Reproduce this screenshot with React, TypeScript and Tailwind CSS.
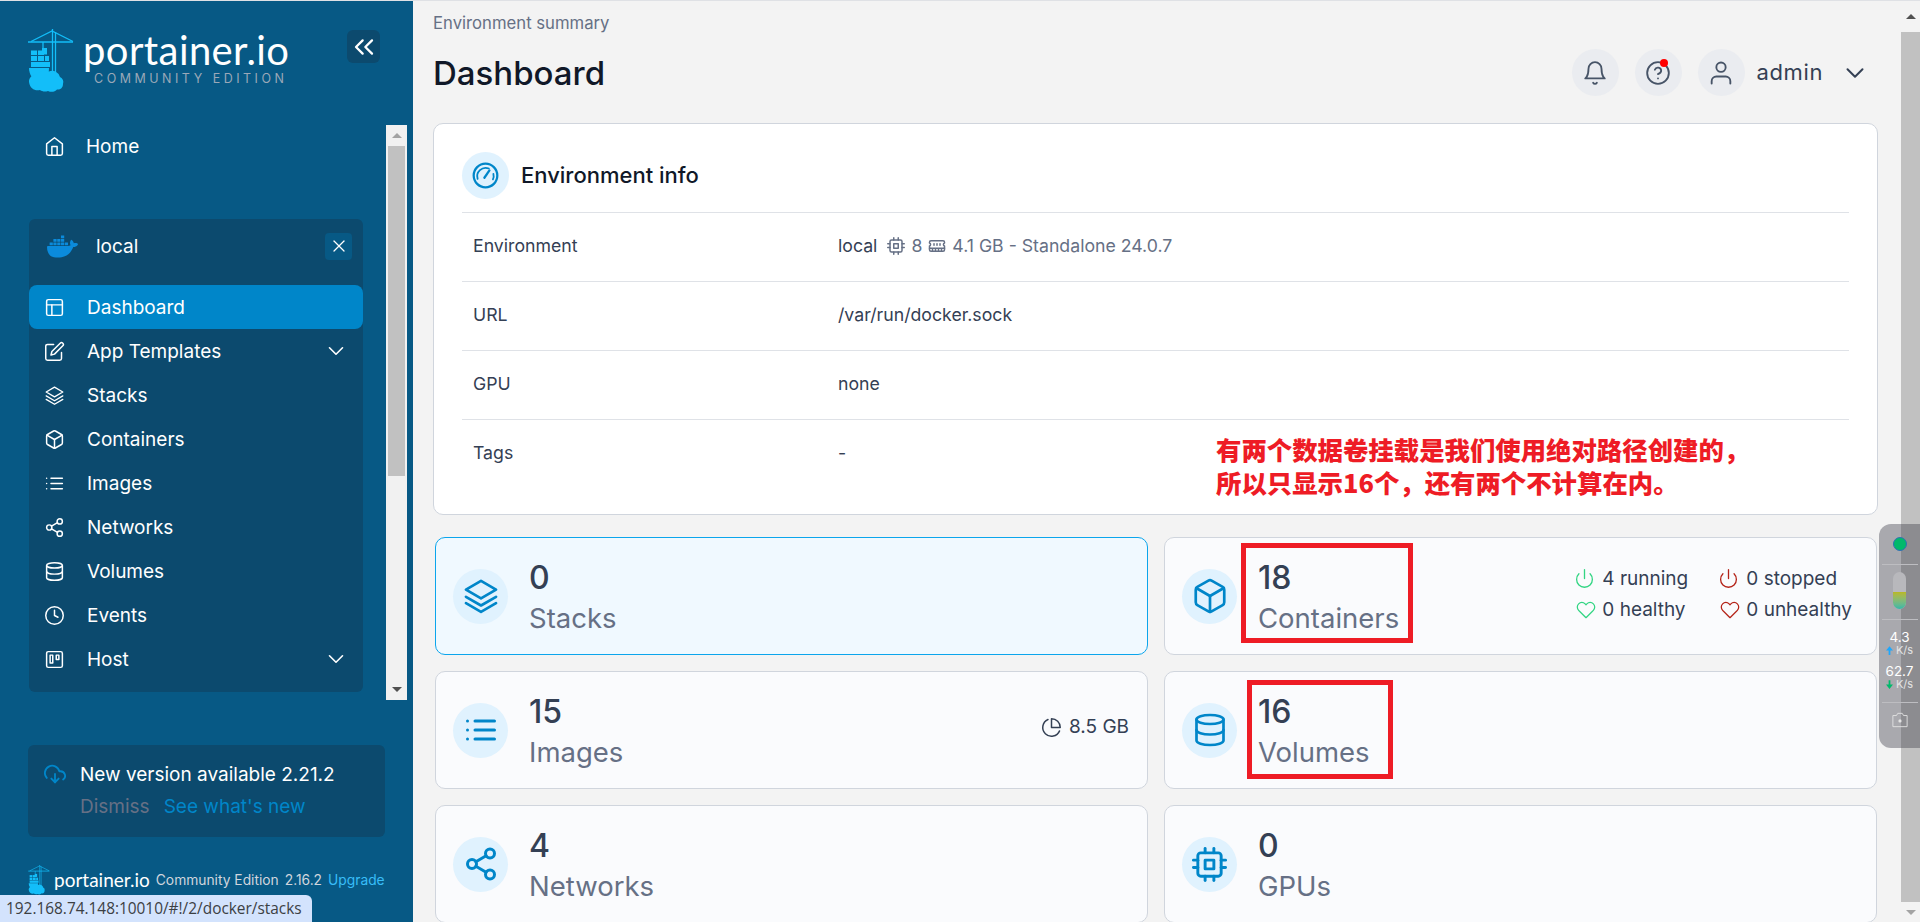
import React from "react";
import {
  FiBox, FiChevronDown, FiClock, FiEdit, FiHeart, FiHome, FiLayout, FiList, FiPower, FiShare2, FiTrello, FiX, FiBell, FiUser, FiCpu, FiPieChart, FiDownloadCloud, FiChevronsLeft, FiHelpCircle,
} from "react-icons/fi";
import { LuDatabase, LuMemoryStick } from "react-icons/lu";
import { SiDocker } from "react-icons/si";

const LayersIcon = ({ className, strokeWidth = 1.7 }: { className?: string; strokeWidth?: number }) => (
  <svg viewBox="0 0 24 24" fill="none" stroke="currentColor" strokeWidth={strokeWidth} strokeLinecap="round" strokeLinejoin="round" className={className}>
    <path d="M12 2.500 2.500 8 12 13.500 21.500 8 12 2.500Z" />
    <path d="M2.500 12.500 12 18l9.500-5.500" />
    <path d="M2.500 16.500 12 22l9.500-5.500" />
  </svg>
);

const GaugeIcon = ({ className }: { className?: string }) => (
  <svg viewBox="0 0 24 24" fill="none" stroke="currentColor" strokeWidth="2" strokeLinecap="round" className={className}>
    <circle cx="12" cy="12" r="10.500" />
    <path d="M5 15a7.500 7.500 0 0 1 10-9.200" strokeWidth="1.600" />
    <path d="M19 10.500a7.500 7.500 0 0 1-.4 5" strokeWidth="1.600" />
    <path d="M11 14l4.500-6.500" />
  </svg>
);

const CameraIcon = ({ className }: { className?: string }) => (
  <svg viewBox="0 0 20 18" fill="none" stroke="currentColor" strokeWidth="1" className={className}>
    <path d="M2 4h4l1.500-2.500h5L14 4h4v12.500H2z" strokeLinejoin="round" />
    <circle cx="10" cy="10" r="1.800" fill="currentColor" stroke="none" />
  </svg>
);

const ArrowIcon = ({ down, className }: { down?: boolean; className?: string }) => (
  <svg viewBox="0 0 8 10" fill="currentColor" className={className}>
    {down ? <path d="M3 0h2v5h3L4 10 0 5h3z" /> : <path d="M3 10h2V5h3L4 0 0 5h3z" />}
  </svg>
);

const Logo = ({ className }: { className?: string }) => (
  <svg viewBox="0 0 46 64" className={className} fill="none">
    <g stroke="#13bef9" strokeWidth="1.300">
      <path d="M0 13h45" strokeWidth="1.600" />
      <path d="M3 12.500 24 2l21 10.500" />
      <path d="M24.500 0v50M27.500 3v46" />
      <path d="M15 13v8" />
    </g>
    <rect x="14" y="19" width="5" height="6.500" fill="#13bef9" />
    <g fill="#13bef9">
      <rect x="3" y="21.500" width="6" height="4.500" />
      <rect x="10" y="21.500" width="6" height="4.500" />
      <rect x="3" y="27" width="6" height="5" />
      <rect x="10" y="27" width="6" height="5" />
      <rect x="17" y="27" width="4" height="5" />
      <rect x="3" y="33" width="19" height="5" />
      <path d="M1 39h20c0 7-3 12-10 13C5 51 1 46 1 39Z" />
      <path d="M1 53a6.500 6.500 0 0 1 8-7 9 9 0 0 1 12-3.500 8 8 0 0 1 11 5.500 6 6 0 0 1 3 7c0 4-3 6-6 5.500-2 2.500-6 3-9 1.500-3 1-6 .5-8-1-5 1-10-1-11-8Z" />
    </g>
  </svg>
);

const navItems: [React.ReactNode, string, boolean?][] = [
  [<FiLayout className="size-[21px]" strokeWidth={1.7} />, "Dashboard"],
  [<FiEdit className="size-[21px]" strokeWidth={1.7} />, "App Templates", true],
  [<LayersIcon className="size-[21px]" strokeWidth={1.5} />, "Stacks"],
  [<FiBox className="size-[21px]" strokeWidth={1.7} />, "Containers"],
  [<FiList className="size-[21px]" strokeWidth={1.7} />, "Images"],
  [<FiShare2 className="size-[21px]" strokeWidth={1.7} />, "Networks"],
  [<LuDatabase className="size-[21px]" strokeWidth={1.7} />, "Volumes"],
  [<FiClock className="size-[21px]" strokeWidth={1.7} />, "Events"],
  [<FiTrello className="size-[21px]" strokeWidth={1.7} />, "Host", true],
];

function Sidebar() {
  return (
    <aside className="w-[413px] shrink-0 bg-[#075985] flex flex-col text-white">
      <div className="h-[63px] mt-[26px] pl-[28px] pr-[33px] flex justify-between items-start">
        <div className="flex mt-[2px]">
          <Logo className="w-[46px] h-[64px]" />
          <div className="ml-[9px] flex flex-col">
            <div className="font-['Lato'] text-[40px] leading-[40px] mt-[1px] tracking-[0.4px]">portainer.io</div>
            <div className="font-['Inter'] text-[12.5px] leading-[14px] mt-[2px] ml-[11px] tracking-[3.5px] text-[#9aa8b8]">COMMUNITY EDITION</div>
          </div>
        </div>
        <button className="size-[33px] mt-[3px] rounded-md bg-[#0c4a6e] flex items-center justify-center">
          <FiChevronsLeft className="size-[32px]" strokeWidth={1.7} />
        </button>
      </div>
      <div className="h-[575px] mt-[35px] flex">
        <div className="flex-1 pl-[29px] pr-[23px] min-w-0">
          <div className="h-[42px] flex items-center text-[19px] pl-[15px]">
            <FiHome className="size-[21px] mr-[21px]" strokeWidth={1.7} />
            <span className="pt-[2px]">Home</span>
          </div>
          <div className="mt-[52px] h-[473px] bg-[#0c4a6e] rounded-md">
            <div className="h-[54px] mb-[12px] flex items-center pl-[18px] pr-[11px] text-[19px]">
              <SiDocker className="w-[31px] h-[31px] text-[#0b8bdc]" />
              <span className="ml-[18px] flex-1 pt-[2px]">local</span>
              <span className="size-[27px] rounded bg-[#075985] flex items-center justify-center">
                <FiX className="size-[20px]" strokeWidth={1.5} />
              </span>
            </div>
            {navItems.map(([icon, label, chevron], i) => (
              <div key={label} className={`h-[44px] flex items-center pl-[15px] pr-[14px] text-[19px] rounded-lg ${i === 0 ? "bg-[#0086c9]" : ""}`}>
                <span className="mr-[22px] flex">{icon}</span>
                <span className="flex-1 pt-[2px]">{label}</span>
                {chevron && <FiChevronDown className="size-[26px]" strokeWidth={1.5} />}
              </div>
            ))}
          </div>
        </div>
        <div className="w-[21px] mr-[6px] h-[575px] bg-[#f1f1f1] flex flex-col items-center">
          <div className="h-[21px] flex items-center justify-center w-full">
            <div className="w-0 h-0 border-x-[5px] border-x-transparent border-b-[5px] border-b-[#a3a3a3]" />
          </div>
          <div className="w-[17px] h-[330px] bg-[#c1c1c1]" />
          <div className="flex-1" />
          <div className="h-[21px] flex items-center justify-center w-full">
            <div className="w-0 h-0 border-x-[5px] border-x-transparent border-t-[5px] border-t-[#505050]" />
          </div>
        </div>
      </div>
      <div className="mt-[45px] ml-[28px] w-[357px] h-[92px] rounded-md bg-[#0c4a6e] pl-[16px] pt-[17px] flex items-start">
        <FiDownloadCloud className="size-[22px] text-[#0086c9] mt-[1px]" />
        <div className="ml-[14px] text-[19px] leading-[24px] pt-[1px]">
          <div>New version available 2.21.2</div>
          <div className="mt-[8px] flex">
            <span className="text-[#667085]">Dismiss</span>
            <span className="ml-[14px] text-[#0086c9]">See what's new</span>
          </div>
        </div>
      </div>
      <div className="mt-[28px] ml-[28px] w-[362px] flex items-start">
        <Logo className="w-[22px] h-[30px] shrink-0" />
        <span className="font-['Lato'] text-[19px] leading-[28px] ml-[4px] mt-[1px]">portainer.io</span>
        <span className="text-[13.8px] leading-[28px] ml-[6px] mt-[1px] text-[#d0d5dd] whitespace-nowrap">Community Edition</span>
        <span className="text-[13.8px] leading-[28px] ml-[6px] mt-[1px] text-[#d0d5dd]">2.16.2</span>
        <span className="text-[13.8px] leading-[28px] ml-[6px] mt-[1px] text-[#38bdf8]">Upgrade</span>
      </div>
    </aside>
  );
}

function IconCircle({ children, className }: { children: React.ReactNode; className?: string }) {
  return <div className={`rounded-full bg-[#e0f2fe] text-[#0086c9] flex items-center justify-center shrink-0 ${className ?? ""}`}>{children}</div>;
}

function StatCard({ icon, value, label, selected, right, narrow }: { icon: React.ReactNode; value: string; label: string; selected?: boolean; right?: React.ReactNode; narrow?: boolean }) {
  return (
    <div className={`relative h-[118px] rounded-[10px] border flex items-center pl-[17px] ${narrow ? "pr-[24px]" : "pr-[18px]"} ${selected ? "bg-[#f0f9ff] border-[#0ba5ec]" : "bg-[#fafbfd] border-[#d0d5dd]"}`}>
      <IconCircle className="size-[55px]">{icon}</IconCircle>
      <div className="ml-[21px] flex-1 pt-[2px]">
        <div className="text-[32px] leading-[40px] text-[#344054] font-medium">{value}</div>
        <div className="text-[27.5px] leading-[36px] mt-[2px] text-[#667085]">{label}</div>
      </div>
      {right}
    </div>
  );
}

function InfoRow({ label, children }: { label: string; children: React.ReactNode }) {
  return (
    <div className="h-[69px] border-t border-[#dfe2e7] flex items-center px-[11px] pb-[2px] text-[17.7px] text-[#344054]">
      <div className="w-[365px]">{label}</div>
      <div className="flex items-center">{children}</div>
    </div>
  );
}

const SmallStat = ({ icon, text, color }: { icon: React.ReactNode; text: string; color: string }) => (
  <div className="flex items-center text-[19px] leading-[31px] text-[#344054] whitespace-nowrap">
    <span className={`flex w-[26px] ${color}`}>{icon}</span>
    {text}
  </div>
);

function Main() {
  return (
    <main className="flex-1 min-w-0 bg-[#f3f3f3] flex">
      <div className="flex-1 min-w-0 pl-[20px] pr-[23px] overflow-hidden">
        <div className="text-[16.7px] leading-[20px] mt-[12px] text-[#667085] whitespace-nowrap">Environment summary</div>
        <div className="mt-[16px] h-[47px] flex items-center">
          <h1 className="flex-1 text-[33px] mt-[2px] font-medium text-[#101828]">Dashboard</h1>
          <div className="relative size-[47px] rounded-full bg-[#eaecf0] flex items-center justify-center text-[#475467]"><FiBell className="size-[26px]" strokeWidth={1.7} /></div>
          <div className="relative size-[47px] ml-[16px] rounded-full bg-[#eaecf0] flex items-center justify-center text-[#475467]">
            <FiHelpCircle className="size-[26px]" strokeWidth={1.7} />
            <span className="absolute top-[10px] right-[14px] size-[8px] rounded-full bg-[#ff0000]" />
          </div>
          <div className="size-[47px] ml-[16px] rounded-full bg-[#eaecf0] flex items-center justify-center text-[#475467]"><FiUser className="size-[28px]" strokeWidth={1.6} /></div>
          <span className="ml-[12px] text-[22px] tracking-[0.6px] text-[#344054]">admin</span>
          <FiChevronDown className="ml-[17px] mr-[8px] size-[30px] text-[#344054]" strokeWidth={1.6} />
        </div>
        <section className="mt-[27px] h-[392px] bg-white rounded-[10px] border border-[#d0d5dd] px-[28px]">
          <div className="h-[88px] flex items-start pt-[28px]">
            <IconCircle className="size-[47px]"><GaugeIcon className="size-[27px]" /></IconCircle>
            <span className="ml-[12px] mt-[10px] text-[22px] leading-[27px] font-medium text-[#101828]">Environment info</span>
          </div>
          <InfoRow label="Environment">
            <span>local</span>
            <span className="ml-[10px] flex items-center text-[#667085]">
              <FiCpu className="size-[18px] mr-[6px]" />8
              <LuMemoryStick className="size-[18px] ml-[6px] mr-[6px]" />4.1 GB - Standalone 24.0.7
            </span>
          </InfoRow>
          <InfoRow label="URL">/var/run/docker.sock</InfoRow>
          <InfoRow label="GPU">none</InfoRow>
          <InfoRow label="Tags">-</InfoRow>
        </section>
        <div className="mt-[22px] pl-[2px] pr-[1px] grid grid-cols-2 gap-x-[16px] gap-y-[16px]">
          <StatCard selected icon={<LayersIcon className="size-[38px]" />} value="0" label="Stacks" />
          <StatCard
            narrow
            icon={<FiBox className="size-[38px]" strokeWidth={1.7} />}
            value="18"
            label="Containers"
            right={
              <div className="grid grid-cols-[144px_auto] pb-[4px]">
                <SmallStat icon={<FiPower className="size-[21px] -ml-[2px]" strokeWidth={1.5} />} text="4 running" color="text-[#32d583]" />
                <SmallStat icon={<FiPower className="size-[21px] -ml-[2px]" strokeWidth={1.5} />} text="0 stopped" color="text-[#b42318]" />
                <SmallStat icon={<FiHeart className="size-[20px]" strokeWidth={1.5} />} text="0 healthy" color="text-[#32d583]" />
                <SmallStat icon={<FiHeart className="size-[20px]" strokeWidth={1.5} />} text="0 unhealthy" color="text-[#b42318]" />
              </div>
            }
          />
          <StatCard
            icon={<FiList className="size-[36px]" />}
            value="15"
            label="Images"
            right={
              <div className="flex items-center text-[19px] text-[#344054] pb-[6px]">
                <FiPieChart className="size-[21px] mr-[7px]" strokeWidth={1.7} />8.5 GB
              </div>
            }
          />
          <StatCard narrow icon={<LuDatabase className="size-[36px]" strokeWidth={1.8} />} value="16" label="Volumes" />
          <StatCard icon={<FiShare2 className="size-[36px]" />} value="4" label="Networks" />
          <StatCard narrow icon={<FiCpu className="size-[35px]" />} value="0" label="GPUs" />
        </div>
      </div>
      <div className="w-[19px] shrink-0 bg-[#f3f3f3] flex flex-col">
        <div className="h-[31px] flex items-center justify-center">
          <div className="w-0 h-0 border-x-[5px] border-x-transparent border-b-[5px] border-b-[#505050]" />
        </div>
        <div className="h-[870px] bg-[#c1c1c1]" />
        <div className="flex-1 flex items-center justify-center">
          <div className="w-0 h-0 border-x-[5px] border-x-transparent border-t-[5px] border-t-[#a3a3a3]" />
        </div>
      </div>
    </main>
  );
}

export default function App() {
  return (
    <div className="relative w-screen h-screen overflow-hidden flex flex-col font-['Inter',sans-serif]">
      <div className="h-px shrink-0 bg-[#dfe1e5]" />
      <div className="flex-1 min-h-0 flex">
        <Sidebar />
        <Main />
      </div>

      {/* red annotation, drawn over the page */}
      <div className="absolute left-[1216px] top-[433px] font-['Noto_Sans_CJK_SC',sans-serif] font-black text-[25.4px] leading-[33px] text-[#ee1c25] whitespace-nowrap [text-shadow:0_0_2px_#fff,0_0_2px_#fff,0_0_3px_#fff]">
        <div>有两个数据卷挂载是我们使用绝对路径创建的，</div>
        <div>所以只显示16个，还有两个不计算在内。</div>
      </div>
      <div className="absolute left-[1241px] top-[543px] w-[172px] h-[100px] border-[5px] border-[#ee1c25]" />
      <div className="absolute left-[1247px] top-[680px] w-[146px] h-[99px] border-[5px] border-[#ee1c25]" />

      {/* floating traffic widget */}
      <div className="absolute left-[1879px] top-[524px] w-[41px] h-[224px] rounded-l-[12px] bg-[#a9a9ae] flex flex-col items-center text-white font-['Inter']">
        <div className="absolute right-0 top-0 bottom-0 w-[19px] bg-[#8c8c90]" />
        <div className="relative w-[41px] h-[40px] flex items-center justify-center">
          <span className="size-[14px] rounded-full bg-[#00b96b] border border-[#2f6fb5]" />
        </div>
        <div className="relative w-[36px] h-px bg-[#bdbdc1]" />
        <div className="relative mt-[7px] w-[13px] h-[37px] rounded-full bg-[#b8b8bc] overflow-hidden flex flex-col justify-end">
          <div className="h-[17px] bg-gradient-to-b from-[#b8b81f] to-[#2fb8a8]" />
        </div>
        <div className="relative mt-[10px] w-[36px] h-px bg-[#bdbdc1]" />
        <div className="relative mt-[10px] w-full text-center text-[13.5px] leading-[14px]">4.3</div>
        <div className="relative w-full flex items-center justify-center text-[11px] leading-[12px] text-[#e4e4e4]">
          <ArrowIcon className="w-[7px] h-[9px] mr-[3px] text-[#1ea7fd]" />K/s
        </div>
        <div className="relative mt-[8px] w-full text-center text-[13.5px] leading-[14px]">62.7</div>
        <div className="relative w-full flex items-center justify-center text-[11px] leading-[12px] text-[#e4e4e4]">
          <ArrowIcon down className="w-[7px] h-[9px] mr-[3px] text-[#00b96b]" />K/s
        </div>
        <div className="relative mt-[12px] w-[36px] h-px bg-[#bdbdc1]" />
        <CameraIcon className="relative mt-[9px] w-[18px] h-[16px] text-[#e4e4e4]" />
      </div>

      {/* browser link status bubble */}
      <div className="absolute left-0 bottom-0 w-[312px] h-[27px] bg-[#d3e3fd] rounded-tr-md pl-[6px] font-['Open_Sans',sans-serif] text-[15.4px] leading-[27px] text-[#3c4043] whitespace-nowrap">
        192.168.74.148:10010/#!/2/docker/stacks
      </div>
    </div>
  );
}
